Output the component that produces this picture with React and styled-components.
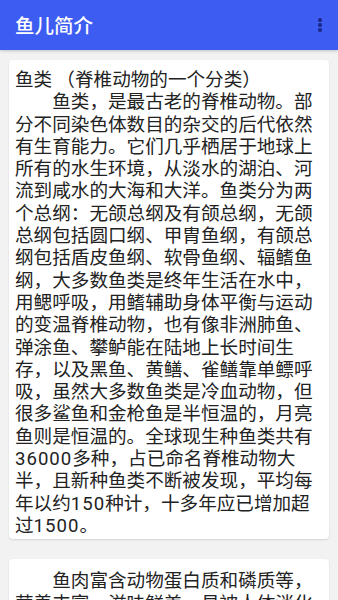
import React from "react";
import styled, { createGlobalStyle } from "styled-components";

const Global = createGlobalStyle`
  html, body { margin: 0; padding: 0; background: #f2f2f2; }
  body { font-family: "Noto Sans CJK SC", "Noto Sans", sans-serif; }
  * { box-sizing: border-box; }
`;

const Page = styled.div`
  width: 338px;
  height: 600px;
  overflow: hidden;
  background: #f2f2f2;
  display: flex;
  flex-direction: column;
`;

const AppBar = styled.header`
  height: 50px;
  flex: none;
  background: #3d5cf2;
  display: flex;
  align-items: center;
  justify-content: space-between;
  padding: 0 14px 0 15px;
  box-shadow: 0 1px 3px rgba(0, 0, 0, 0.2);
`;

const Title = styled.h1`
  margin: 0;
  color: #ffffff;
  font-size: 19.5px;
  font-weight: 500;
  line-height: 1;
`;

const MenuButton = styled.div`
  display: flex;
  flex-direction: column;
  gap: 1.5px;
  align-items: center;
  width: 8px;
`;

const Dot = styled.span`
  width: 3.5px;
  height: 3.5px;
  border-radius: 50%;
  background: #1c2a8a;
`;

const List = styled.main`
  display: flex;
  flex-direction: column;
  gap: 20px;
  padding: 10px 9px 0 9px;
`;

const Card = styled.section`
  background: #ffffff;
  border-radius: 4px;
  box-shadow: 0 1px 2px rgba(0, 0, 0, 0.12);
  padding: ${(p) => p.$pt || 7}px 15px 4px 6px;
`;

const Text = styled.p`
  margin: 0;
  color: #222222;
  font-size: 18.6px;
  line-height: 22.3px;
  white-space: pre-wrap;
  word-break: normal;
  line-break: strict;
`;

const Num = styled.span`
  font-family: Roboto, "Noto Sans", sans-serif;
  letter-spacing: 1px;
  line-height: 14px;
`;

const withNums = (s) =>
  s.split(/(\d+)/).map((part, i) =>
    /^\d+$/.test(part) ? <Num key={i}>{part}</Num> : part
  );

const card1 =
  "鱼类 （脊椎动物的一个分类）\n" +
  "\u3000\u3000鱼类，是最古老的脊椎动物。部分不同染色体数目的杂交的后代依然有生育能力。它们几乎栖居于地球上所有的水生环境，从淡水的湖泊、河流到咸水的大海和大洋。鱼类分为两个总纲：无颌总纲及有颌总纲，无颌总纲包括圆口纲、甲胄鱼纲，有颌总纲包括盾皮鱼纲、软骨鱼纲、辐鳍鱼纲，大多数鱼类是终年生活在水中，用鳃呼吸，用鳍辅助身体平衡与运动的变温脊椎动物，也有像非洲肺鱼、弹涂鱼、攀鲈能在陆地上长时间生存，以及黑鱼、黄鳝、雀鳝靠单鳔呼吸，虽然大多数鱼类是冷血动物，但很多鲨鱼和金枪鱼是半恒温的，月亮鱼则是恒温的。全球现生种鱼类共有36000多种，占已命名脊椎动物大半，且新种鱼类不断被发现，平均每年以约150种计，十多年应已增加超过1500。";

const card2 =
  "\u3000\u3000鱼肉富含动物蛋白质和磷质等，营养丰富，滋味鲜美，易被人体消化吸收，对人类体力和智力的发展具有重大的作用。";

export default function App() {
  return (
    <>
      <Global />
      <Page>
        <AppBar>
          <Title>鱼儿简介</Title>
          <MenuButton>
            <Dot />
            <Dot />
            <Dot />
          </MenuButton>
        </AppBar>
        <List>
          <Card>
            <Text>{withNums(card1)}</Text>
          </Card>
          <Card $pt={9}>
            <Text>{withNums(card2)}</Text>
          </Card>
        </List>
      </Page>
    </>
  );
}
